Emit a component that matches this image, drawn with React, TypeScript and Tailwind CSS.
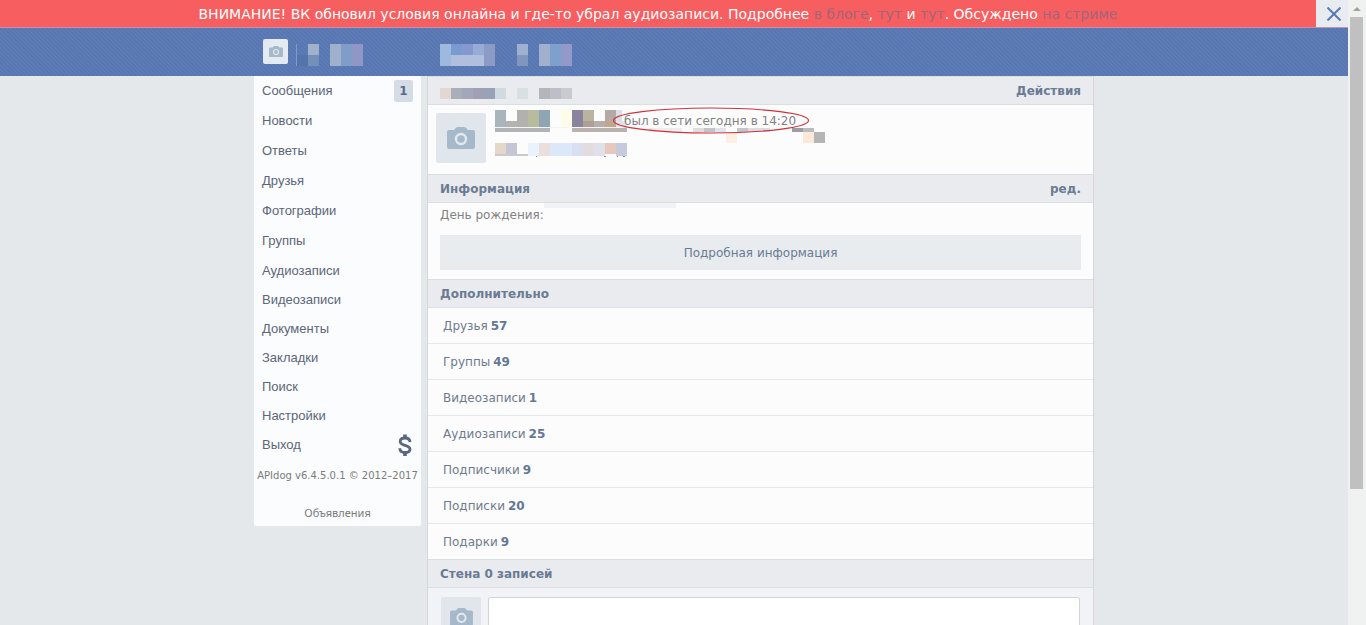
import { clsx } from 'clsx';

type Cell = [x: number, y: number, w: number, h: number, fill: string];

const TALL_ITEMS = ['Сообщения', 'Новости', 'Ответы', 'Друзья', 'Фотографии', 'Группы'];
const SHORT_ITEMS = ['Аудиозаписи', 'Видеозаписи', 'Документы', 'Закладки', 'Поиск', 'Настройки', 'Выход'];

const COUNTERS = [
  { title: 'Друзья', count: 57 },
  { title: 'Группы', count: 49 },
  { title: 'Видеозаписи', count: 1 },
  { title: 'Аудиозаписи', count: 25 },
  { title: 'Подписчики', count: 9 },
  { title: 'Подписки', count: 20 },
  { title: 'Подарки', count: 9 },
];

const HEAD_USER: Cell[] = [
  [0, 0, 1, 22, '#7f9acb'],
  [1, 11, 11, 11, '#5474ab'],
  [12, 0, 11, 11, '#9fb1cb'],
  [12, 11, 11, 11, '#748fb8'],
  [34, 0, 11, 22, '#9fb0cd'],
  [45, 0, 11, 22, '#7f9dc8'],
  [56, 0, 11, 22, '#9097c6'],
];

const HEAD_TITLE: Cell[] = [
  [0, 0, 11, 22, '#9db9de'],
  [11, 0, 11, 11, '#7b9bd0'],
  [22, 0, 11, 11, '#8598d0'],
  [33, 0, 11, 11, '#98abd4'],
  [11, 11, 33, 11, '#b2bede'],
  [44, 0, 11, 22, '#8c9bc5'],
  [77, 0, 11, 11, '#a0b0d0'],
  [77, 11, 11, 11, '#8196bd'],
  [99, 0, 11, 22, '#a0b0cd'],
  [110, 0, 11, 22, '#7f9fcd'],
  [121, 0, 11, 22, '#9399c8'],
];

const PAGE_TITLE: Cell[] = [
  [0, 0, 11, 11, '#e2d8d0'],
  [11, 0, 11, 11, '#a9afb8'],
  [22, 0, 11, 11, '#a3a7b9'],
  [33, 0, 11, 11, '#a19fb4'],
  [44, 0, 11, 11, '#98a2b8'],
  [55, 0, 11, 11, '#d0dae1'],
  [77, 0, 11, 11, '#d9e1e0'],
  [99, 0, 11, 11, '#b4b4bb'],
  [110, 0, 11, 11, '#bcbfc8'],
  [121, 0, 11, 11, '#c8cacf'],
];

const PROFILE: Cell[] = [
  [0, 0, 11, 18, '#a9b4bb'],
  [11, 11, 11, 7, '#b3b3b3'],
  [22, 0, 11, 18, '#b3b1ad'],
  [33, 0, 11, 18, '#b9bb9d'],
  [44, 0, 11, 18, '#8fa5b3'],
  [66, 0, 11, 18, '#fffbe9'],
  [77, 0, 11, 18, '#8a839d'],
  [88, 0, 11, 11, '#b9b3a2'],
  [88, 11, 11, 7, '#ae9e93'],
  [99, 11, 11, 7, '#b5aeab'],
  [110, 0, 11, 11, '#b1aaa5'],
  [110, 11, 11, 7, '#c2a78d'],
  [121, 0, 6, 11, '#d9dfe8'],
  [121, 11, 11, 6, '#e3e3e6'],
  [0, 17, 132, 1, '#f4f4f5'],
  [0, 18, 55, 4, '#b1b3b5'],
  [77, 18, 55, 4, '#b7b2ae'],
  [154, 18, 33, 4, '#ededee'],
  [198, 18, 11, 4, '#dfdcdc'],
  [209, 18, 11, 4, '#c2c4c7'],
  [220, 18, 11, 4, '#dfe5ec'],
  [242, 18, 11, 4, '#c4c5c8'],
  [253, 18, 22, 4, '#d9dde2'],
  [297, 18, 11, 4, '#9c9ba0'],
  [308, 18, 11, 4, '#bcbcc0'],
  [231, 22, 11, 11, '#fdf0e3'],
  [308, 22, 11, 11, '#fce8d8'],
  [319, 22, 11, 11, '#b5b5b5'],
  [0, 33, 11, 12, '#e6d7cb'],
  [11, 33, 11, 12, '#c5c6d4'],
  [0, 44, 33, 2, '#c9cacd'],
  [33, 33, 11, 13, '#eaf2fb'],
  [44, 33, 11, 13, '#eadfdd'],
  [55, 33, 22, 13, '#dce8fa'],
  [77, 33, 11, 13, '#d9dff0'],
  [88, 33, 11, 13, '#e3dcdf'],
  [99, 33, 11, 13, '#dfe0ea'],
  [110, 33, 11, 11, '#e8c8bd'],
  [121, 33, 11, 13, '#c5cadd'],
  [41, 46, 1, 1, '#888888'],
  [109, 46, 2, 1, '#888888'],
  [122, 46, 1, 1, '#888888'],
  [128, 46, 2, 1, '#888888'],
];

function Mosaic({ cells, width, height, className }: { cells: Cell[]; width: number; height: number; className?: string }) {
  return (
    <svg width={width} height={height} shapeRendering="crispEdges" aria-hidden="true" className={clsx('shrink-0', className)}>
      {cells.map(([x, y, w, h, fill], i) => (
        <rect key={i} x={x} y={y} width={w} height={h} fill={fill} />
      ))}
    </svg>
  );
}

function Camera({ className }: { className: string }) {
  return (
    <svg viewBox="0 0 28 22" className={className} aria-hidden="true">
      <path fill="#a6b9ca" d="M2 3h5l2-2.2Q9.500 0 10.500 0h7q1 0 1.500.8L21 3h5q2 0 2 2v15q0 2-2 2H2q-2 0-2-2V5q0-2 2-2z" />
      <circle cx="14" cy="12" r="5" fill="none" stroke="#e1e8ef" strokeWidth="2.400" />
    </svg>
  );
}

function SectionHead({ children, action }: { children: React.ReactNode; action?: string }) {
  return (
    <div className="flex h-[29px] items-center justify-between border-y border-[#dcdfe2] bg-[#e9ebee] px-3 text-[12px] font-bold text-[#6a7b94]">
      <h2>{children}</h2>
      {action && <a href="#">{action}</a>}
    </div>
  );
}

function Sidebar() {
  return (
    <nav className="w-[167px] shrink-0 self-start rounded-b-xs bg-[#fafcfd] font-['Liberation_Sans',sans-serif] text-[13px] text-[#5c6678]">
      <ul>
        {TALL_ITEMS.map((item, i) => (
          <li key={item}>
            <a href="#" className="flex h-[30px] items-center justify-between px-2">
              {item}
              {i === 0 && (
                <b className="flex h-[22px] w-[19px] items-center justify-center rounded-xs bg-[#d6dce5] font-['DejaVu_Sans',sans-serif] text-[12px] text-[#566b87]">
                  1
                </b>
              )}
            </a>
          </li>
        ))}
        {SHORT_ITEMS.map((item) => (
          <li key={item} className="flex h-[29px] items-center justify-between px-2">
            <a href="#">{item}</a>
            {item === 'Выход' && (
              <svg width="16" height="24" viewBox="0 0 16 24" fill="none" stroke="#5a6780" aria-hidden="true">
                <path strokeWidth="3.600" d="M8 1.500v4M8 19v4" />
                <path strokeWidth="2.800" d="M13 9C12.800 6.300 10.800 5 8 5S3.200 6.300 3.200 8.500c0 2.300 2 3 4.800 3.800s5 1.600 5 3.900c0 2.200-2.200 3.300-5 3.300s-5.100-1.400-5.200-4.200" />
              </svg>
            )}
          </li>
        ))}
      </ul>
      <footer className="flex flex-col items-center font-['DejaVu_Sans',sans-serif] text-[#7b7b7b]">
        <p className="h-8 text-[10px] leading-[34px] whitespace-nowrap">APIdog v6.4.5.0.1 © 2012–2017</p>
        <a href="#" className="mt-2 h-[27px] font-['Noto_Sans',sans-serif] text-[11px] leading-[27px]">
          Объявления
        </a>
      </footer>
    </nav>
  );
}

function Profile() {
  return (
    <section className="flex h-[69px] items-start bg-[#fcfcfd] px-2 pt-2">
      <div className="flex size-[50px] shrink-0 items-center justify-center rounded-xs bg-[#e1e6ec]">
        <Camera className="h-[22px] w-7" />
      </div>
      <div className="relative ml-[9px]">
        <Mosaic cells={PROFILE} width={330} height={47} className="absolute -top-[3px] left-0" />
        <p className="relative pl-[129px] text-[12px] leading-4 whitespace-nowrap text-[#828282]">
          был в сети сегодня в 14:20
          <svg width="198" height="28" className="absolute -top-[6px] left-[118px]" aria-hidden="true">
            <ellipse cx="98" cy="13.500" rx="97.500" ry="12.500" fill="none" stroke="#d2303a" strokeWidth="1.200" />
          </svg>
        </p>
      </div>
    </section>
  );
}

export default function App() {
  return (
    <div className="flex h-screen overflow-hidden bg-[#e4e8ea] font-['DejaVu_Sans',sans-serif] text-[12px]">
      <div className="min-w-0 flex-1">
        <div className="flex h-7 border-b border-[#c391b0] bg-[#f65e60]">
          <p className="flex-1 text-center text-[14px] leading-7 whitespace-nowrap text-white">
            ВНИМАНИЕ! ВК обновил условия онлайна и где-то убрал аудиозаписи. Подробнее{' '}
            <a href="#" className="text-[#a2667b]">в блоге</a>, <a href="#" className="text-[#a2667b]">тут</a> и{' '}
            <a href="#" className="text-[#a2667b]">тут</a>. Обсуждено <a href="#" className="text-[#a2667b]">на стриме</a>
          </p>
          <button type="button" aria-label="Закрыть" className="flex w-8 items-center justify-center bg-[#e8ecf0] pl-1">
            <svg width="14" height="14" viewBox="0 0 14 14" stroke="#5a79b2" strokeWidth="2" aria-hidden="true">
              <path d="M.5.5l13 13M13.500.5L.5 13.500" />
            </svg>
          </button>
        </div>

        <header className="h-12 bg-[#5b79b3] bg-[repeating-linear-gradient(45deg,#5876b1_0px,#5876b1_1px,#607eb7_2px,#5876b1_3px)]">
          <div className="mx-auto flex h-full w-[840px] items-start pt-[11px]">
            <div className="flex w-[186px] items-start pl-[9px]">
              <div className="mr-2 flex size-[25px] items-center justify-center rounded-xs bg-[#e3eaf2]">
                <Camera className="h-[11px] w-[14px]" />
              </div>
              <Mosaic cells={HEAD_USER} width={67} height={22} className="mt-[5px]" />
            </div>
            <Mosaic cells={HEAD_TITLE} width={132} height={22} className="mt-[5px]" />
          </div>
        </header>

        <div className="mx-auto flex w-[840px] gap-[6px]">
          <Sidebar />
          <main className="min-w-0 flex-1 border-x border-[#d3d8dc] bg-[#fcfcfd]">
            <SectionHead action="Действия">
              <Mosaic cells={PAGE_TITLE} width={132} height={11} className="mt-[6px]" />
            </SectionHead>
            <Profile />

            <SectionHead action="ред.">Информация</SectionHead>
            <section className="h-[76px] px-3">
              <div className="flex h-8 items-start text-[#828282]">
                <span className="leading-6">День рождения:</span>
                <span className="h-[5px] w-[132px] bg-[#f1f2f4]" />
              </div>
              <button type="button" className="h-[35px] w-full bg-[#e8ecef] text-[#6a7b94]">
                Подробная информация
              </button>
            </section>

            <SectionHead>Дополнительно</SectionHead>
            <ul className="divide-y divide-[#e4e7ea] text-[#6f7b8c]">
              {COUNTERS.map((row) => (
                <li key={row.title} className="h-9 last:h-[35px]">
                  <a href="#" className="flex h-[35px] items-center gap-[3px] px-[15px]">
                    {row.title} <b className="text-[#637894]">{row.count}</b>
                  </a>
                </li>
              ))}
            </ul>

            <SectionHead>Стена 0 записей</SectionHead>
            <form className="flex gap-[7px] bg-[#f1f3f6] px-[13px] pt-[9px] pb-3">
              <div className="flex size-10 shrink-0 items-center justify-center rounded-xs bg-[#e1e6ec]">
                <Camera className="h-[18px] w-[23px]" />
              </div>
              <textarea aria-label="Новая запись" className="h-20 flex-1 resize-none rounded-xs border border-[#cfd4d9] bg-white p-2" />
            </form>
          </main>
        </div>
      </div>

      <div className="flex w-[18px] shrink-0 flex-col items-start bg-[#f0f1f1] pl-[2px]" aria-hidden="true">
        <svg width="13" height="17" className="shrink-0">
          <path d="M3 11l4-4 4 4z" fill="#a0a0a0" />
        </svg>
        <div className="h-[472px] w-[13px] bg-[#c0c0c0]" />
      </div>
    </div>
  );
}
